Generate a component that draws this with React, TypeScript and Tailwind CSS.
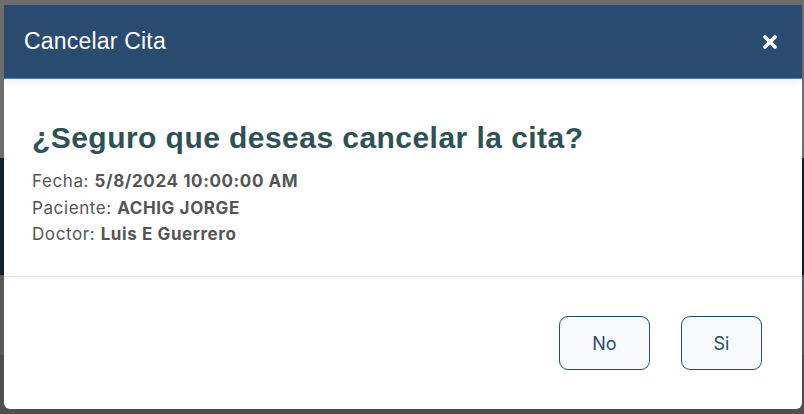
import { X } from "lucide-react";

const details = [
  { label: "Fecha:", value: "5/8/2024 10:00:00 AM" },
  { label: "Paciente:", value: "ACHIG JORGE" },
  { label: "Doctor:", value: "Luis E Guerrero" },
];

function Backdrop() {
  return (
    <div className="flex flex-col h-[414px] w-[804px]">
      <div className="h-[158px] bg-[#6d6d6d]" />
      <div className="h-[117px] bg-[#14202e]" />
      <div className="h-[80px] bg-[#595959]" />
      <div className="flex-1 bg-[#4f4f4f]" />
    </div>
  );
}

export default function App() {
  return (
    <div className="relative h-[414px] w-[804px] overflow-hidden">
      <Backdrop />

      <div className="absolute left-[4px] top-[5px] w-[798px] h-[404px] bg-white rounded-b-[6px] flex flex-col overflow-hidden">
        <div className="relative z-10 h-[74px] bg-[#294b6f] border-b border-[#4c80b8] shadow-[0_3px_8px_rgba(0,0,0,0.07)] flex items-center justify-between pl-[20px] pr-[22px]">
          <h2 className="text-[23px] tracking-[0.2px] text-white font-['Liberation_Sans',Arial,sans-serif] leading-none">
            Cancelar Cita
          </h2>
          <button className="text-white">
            <X className="size-[20px]" strokeWidth={4.5} />
          </button>
        </div>

        <div className="h-[197px] px-[28px] pt-[42px]">
          <h3 className="text-[30px] tracking-[0.45px] leading-[34px] font-bold text-[#2e5254] font-['Liberation_Sans',Arial,sans-serif]">
            ¿Seguro que deseas cancelar la cita?
          </h3>
          <div className="mt-[13px] font-['Inter',sans-serif] text-[17px] tracking-[0.6px] leading-[26.5px] text-[#555555]">
            {details.map((d) => (
              <p key={d.label}>
                {d.label} <span className="font-bold">{d.value}</span>
              </p>
            ))}
          </div>
        </div>

        <div className="flex-1 border-t border-[#e4e4e4] flex items-center justify-end gap-[31px] pr-[40px]">
          <button className="w-[91px] h-[54px] rounded-[9px] border border-[#294b6f] bg-[#f8fbfe] text-[#294b6f] text-[18px] font-['Inter',sans-serif]">
            No
          </button>
          <button className="w-[81px] h-[54px] rounded-[9px] border border-[#294b6f] bg-[#f8fbfe] text-[#294b6f] text-[18px] font-['Inter',sans-serif]">
            Si
          </button>
        </div>
      </div>
    </div>
  );
}
